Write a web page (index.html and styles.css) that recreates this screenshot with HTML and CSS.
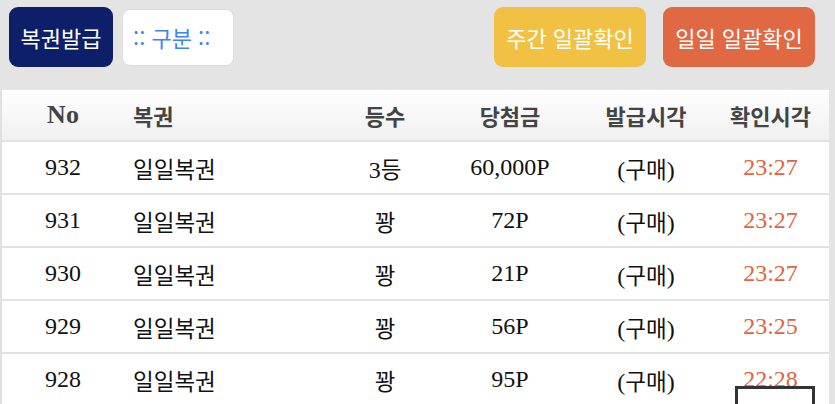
FILE: index.html
```html
<!DOCTYPE html>
<html lang="ko">
<head>
<meta charset="utf-8">
<title>복권</title>
<link rel="stylesheet" href="styles.css">
</head>
<body>
<div class="topbar">
  <div class="group">
    <button class="btn btn-navy">복권발급</button>
    <div class="select">:: 구분 ::</div>
  </div>
  <div class="group right">
    <button class="btn btn-yellow">주간 일괄확인</button>
    <button class="btn btn-orange">일일 일괄확인</button>
  </div>
</div>
<div class="card">
  <table class="tbl">
    <colgroup>
      <col class="c1"><col class="c2"><col class="c3"><col class="c4"><col class="c5"><col class="c6">
    </colgroup>
    <thead>
      <tr>
        <th class="no">No</th>
        <th class="left">복권</th>
        <th>등수</th>
        <th>당첨금</th>
        <th>발급시각</th>
        <th>확인시각</th>
      </tr>
    </thead>
    <tbody>
      <tr><td>932</td><td class="left"><span class="ko">일일복권</span></td><td>3<span class="ko">등</span></td><td>60,000P</td><td>(<span class="ko">구매</span>)</td><td class="time">23:27</td></tr>
      <tr><td>931</td><td class="left"><span class="ko">일일복권</span></td><td><span class="ko">꽝</span></td><td>72P</td><td>(<span class="ko">구매</span>)</td><td class="time">23:27</td></tr>
      <tr><td>930</td><td class="left"><span class="ko">일일복권</span></td><td><span class="ko">꽝</span></td><td>21P</td><td>(<span class="ko">구매</span>)</td><td class="time">23:27</td></tr>
      <tr><td>929</td><td class="left"><span class="ko">일일복권</span></td><td><span class="ko">꽝</span></td><td>56P</td><td>(<span class="ko">구매</span>)</td><td class="time">23:25</td></tr>
      <tr><td>928</td><td class="left"><span class="ko">일일복권</span></td><td><span class="ko">꽝</span></td><td>95P</td><td>(<span class="ko">구매</span>)</td><td class="time">22:28</td></tr>
    </tbody>
  </table>
</div>
<div class="floatbox"></div>
</body>
</html>
```
FILE: styles.css
```css
html, body {
  margin: 0;
  padding: 0;
  background: #e4e4e4;
  overflow: hidden;
}
body {
  font-family: "Liberation Serif", "Noto Sans CJK KR", serif;
  color: #111;
}
.topbar {
  display: flex;
  justify-content: space-between;
  align-items: center;
  padding: 7px 20px 0 9px;
  height: 60px;
}
.group {
  display: flex;
  align-items: center;
  gap: 9px;
}
.group.right {
  gap: 17px;
}
.btn {
  height: 60px;
  border: none;
  border-radius: 9px;
  color: #fff;
  font-family: "Noto Sans CJK KR", "Noto Sans", sans-serif;
  font-size: 22px;
  padding: 0;
  cursor: pointer;
}
.btn-navy {
  width: 104px;
  background: #0d1f68;
}
.btn-yellow {
  width: 152px;
  background: #f1c144;
}
.btn-orange {
  width: 152px;
  background: #e06944;
}
.select {
  width: 100px;
  height: 55px;
  box-sizing: content-box;
  border: 1px solid #dcdcdc;
  border-radius: 8px;
  background: #fff;
  color: #3b86f2;
  font-family: "Noto Sans CJK KR", "Noto Sans", sans-serif;
  font-size: 22px;
  display: flex;
  align-items: center;
  padding-left: 10px;
  white-space: pre;
}
.card {
  margin: 22px 6px 0 0;
  background: #fff;
  border-left: 2px solid #e0e0e0;
  border-top: 1px solid #e8e8e8;
}
.tbl {
  width: 100%;
  border-collapse: collapse;
  table-layout: fixed;
}
.c1 { width: 122px; }
.c2 { width: 206px; }
.c3 { width: 110px; }
.c4 { width: 140px; }
.c5 { width: 132px; }
.c6 { width: auto; }
.tbl th {
  height: 50px;
  padding: 0;
  font-family: "Noto Sans CJK KR", sans-serif;
  font-weight: 700;
  font-size: 22px;
  color: #444;
  background: linear-gradient(#ffffff, #f0f0f0);
  border-bottom: 2px solid #e2e2e2;
  text-align: center;
  vertical-align: middle;
}
.tbl th.no {
  font-family: "Liberation Serif", serif;
  font-size: 26px;
}
.tbl td {
  height: 51px;
  padding: 0;
  font-size: 24px;
  text-align: center;
  vertical-align: middle;
  border-bottom: 2px solid #e2e2e2;
  white-space: nowrap;
}
.tbl .left {
  text-align: left;
  padding-left: 9px;
}
.ko {
  font-family: "Noto Sans CJK KR", sans-serif;
  font-size: 22.5px;
}
.tbl td.time {
  color: #e5623e;
}
.floatbox {
  position: fixed;
  left: 735px;
  top: 386px;
  width: 74px;
  height: 60px;
  border: 3px solid #333;
}
```
